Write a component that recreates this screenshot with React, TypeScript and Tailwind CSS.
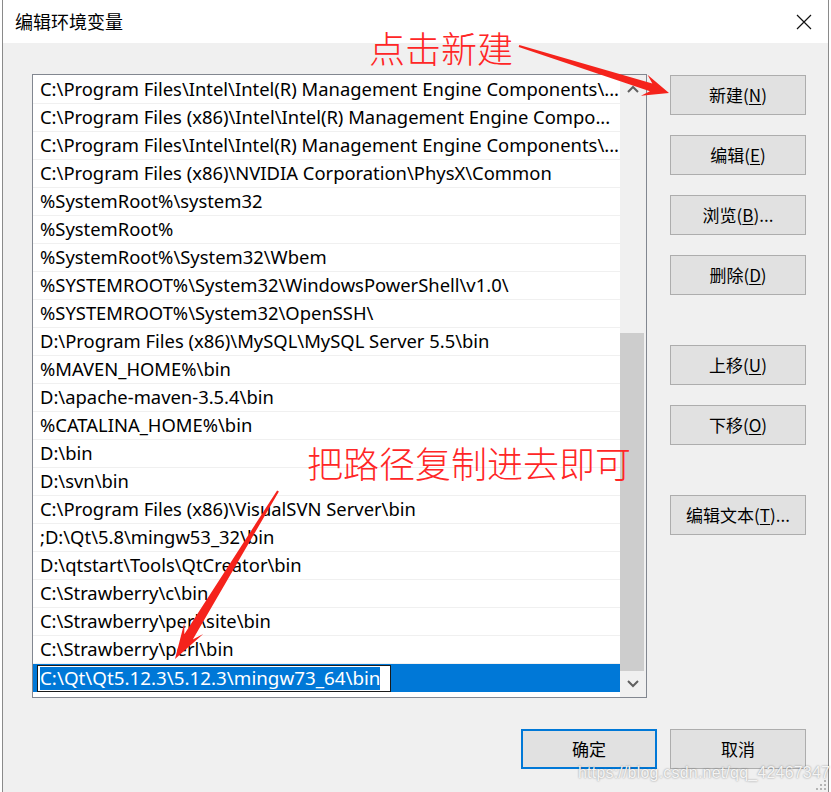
import React from 'react';

const paths: string[] = [
  'C:\\Program Files\\Intel\\Intel(R) Management Engine Components\\...',
  'C:\\Program Files (x86)\\Intel\\Intel(R) Management Engine Compo...',
  'C:\\Program Files\\Intel\\Intel(R) Management Engine Components\\...',
  'C:\\Program Files (x86)\\NVIDIA Corporation\\PhysX\\Common',
  '%SystemRoot%\\system32',
  '%SystemRoot%',
  '%SystemRoot%\\System32\\Wbem',
  '%SYSTEMROOT%\\System32\\WindowsPowerShell\\v1.0\\',
  '%SYSTEMROOT%\\System32\\OpenSSH\\',
  'D:\\Program Files (x86)\\MySQL\\MySQL Server 5.5\\bin',
  '%MAVEN_HOME%\\bin',
  'D:\\apache-maven-3.5.4\\bin',
  '%CATALINA_HOME%\\bin',
  'D:\\bin',
  'D:\\svn\\bin',
  'C:\\Program Files (x86)\\VisualSVN Server\\bin',
  ';D:\\Qt\\5.8\\mingw53_32\\bin',
  'D:\\qtstart\\Tools\\QtCreator\\bin',
  'C:\\Strawberry\\c\\bin',
  'C:\\Strawberry\\perl\\site\\bin',
  'C:\\Strawberry\\perl\\bin',
];

const selectedPath = 'C:\\Qt\\Qt5.12.3\\5.12.3\\mingw73_64\\bin';

// polygon for a hand-drawn style annotation arrow (tapered shaft + swept head)
function arrowPoints(tx: number, ty: number, px: number, py: number, headLen: number, headHalf: number, tailHalf: number, neckHalf: number) {
  const dx = px - tx;
  const dy = py - ty;
  const len = Math.hypot(dx, dy);
  const ux = dx / len;
  const uy = dy / len;
  const nx = -uy;
  const ny = ux;
  const neck = headLen * 0.72;
  const nxc = px - ux * neck;
  const nyc = py - uy * neck;
  const wxc = px - ux * headLen;
  const wyc = py - uy * headLen;
  const pts = [
    [tx + nx * tailHalf, ty + ny * tailHalf],
    [nxc + nx * neckHalf, nyc + ny * neckHalf],
    [wxc + nx * headHalf, wyc + ny * headHalf],
    [px, py],
    [wxc - nx * headHalf, wyc - ny * headHalf],
    [nxc - nx * neckHalf, nyc - ny * neckHalf],
    [tx - nx * tailHalf, ty - ny * tailHalf],
  ];
  return pts.map(p => `${p[0].toFixed(1)},${p[1].toFixed(1)}`).join(' ');
}

const Chevron: React.FC<{ up?: boolean }> = ({ up }) => (
  <svg width="12" height="8" viewBox="0 0 12 8">
    <polyline
      points={up ? '1,7 6,2 11,7' : '1,1 6,6 11,1'}
      fill="none"
      stroke="#606060"
      strokeWidth="2"
    />
  </svg>
);

interface WinButtonProps {
  label: string;
  hotkey?: string;
  suffix?: string;
  className?: string;
  primary?: boolean;
}

const WinButton: React.FC<WinButtonProps> = ({ label, hotkey, suffix = '', className = '', primary }) => (
  <div
    className={`w-[136px] h-[40px] flex items-center justify-center bg-[#e1e1e1] text-[17px] text-black ${
      primary ? 'border-2 border-[#0078d7]' : 'border border-[#adadad]'
    } ${className}`}
  >
    <span>
      {label}
      {hotkey && (
        <>
          (<span className="underline underline-offset-2">{hotkey}</span>)
        </>
      )}
      {suffix}
    </span>
  </div>
);

export default function App() {
  return (
    <div className="relative w-[831px] h-[792px] overflow-hidden flex bg-white font-['Noto_Sans','Noto_Sans_CJK_SC',sans-serif]">
      {/* sliver of the window behind */}
      <div className="w-[2px] h-full bg-white" />

      <div className="w-[827px] h-full flex flex-col border-x border-[#8a8a8a]">
        {/* title bar */}
        <div className="h-[43px] bg-white flex items-center justify-between pl-[12px] pr-[16px]">
          <span className="text-[18px] text-black font-['Noto_Sans_CJK_SC',sans-serif]">编辑环境变量</span>
          <svg width="16" height="16" viewBox="0 0 16 16">
            <path d="M1 1 L15 15 M15 1 L1 15" stroke="#111" strokeWidth="1.2" />
          </svg>
        </div>

        {/* body */}
        <div className="flex-1 bg-[#f0f0f0] flex flex-col pt-[31px] pl-[29px] pr-[21px]">
          <div className="flex gap-[23px]">
            {/* list box */}
            <div className="w-[615px] h-[624px] border border-[#828790] bg-white flex">
              <div className="w-[587px] pt-[1px] flex flex-col">
                {paths.map((p, i) => (
                  <div
                    key={i}
                    className="h-[28px] shrink-0 border-b border-[#f0f0f0] pl-[7px] pb-[1px] flex items-center text-[18.4px] text-black whitespace-nowrap overflow-hidden"
                  >
                    {p}
                  </div>
                ))}
                <div className="h-[28px] shrink-0 bg-[#0078d7] pl-[4px] flex items-center">
                  <div className="h-[27px] bg-white border border-[#1a1a1a] flex items-center pl-[2px] pr-[10px]">
                    <span className="bg-[#0078d7] text-white text-[18.8px] leading-[23px] whitespace-nowrap">
                      {selectedPath}
                    </span>
                  </div>
                </div>
              </div>

              {/* scrollbar */}
              <div className="w-[26px] h-full bg-[#f0f0f0] flex flex-col">
                <div className="h-[26px] flex items-center justify-center pr-[1px] pt-[2px]">
                  <Chevron up />
                </div>
                <div className="flex-1 flex flex-col justify-end">
                  <div className="h-[338px] bg-[#cdcdcd] mr-[2px]" />
                </div>
                <div className="h-[26px] flex items-center justify-center pr-[1px]">
                  <Chevron />
                </div>
              </div>
            </div>

            {/* side buttons */}
            <div className="flex flex-col gap-[20px] pt-[1px] font-['Noto_Sans_CJK_SC',sans-serif]">
              <WinButton label="新建" hotkey="N" />
              <WinButton label="编辑" hotkey="E" />
              <WinButton label="浏览" hotkey="B" suffix="..." />
              <WinButton label="删除" hotkey="D" />
              <WinButton label="上移" hotkey="U" className="mt-[30px]" />
              <WinButton label="下移" hotkey="O" />
              <WinButton label="编辑文本" hotkey="T" suffix="..." className="mt-[30px]" />
            </div>
          </div>

          {/* ok / cancel */}
          <div className="flex justify-end gap-[13px] mt-[31px] pr-[1px] font-['Noto_Sans_CJK_SC',sans-serif]">
            <WinButton label="确定" primary />
            <WinButton label="取消" />
          </div>
        </div>
      </div>

      <div className="w-[2px] h-full bg-white" />

      {/* resize grip */}
      <svg className="absolute right-[4px] bottom-[1px]" width="12" height="12" viewBox="0 0 12 12">
        <rect x="9" y="1" width="2" height="2" fill="#b4b4b4" />
        <rect x="5" y="5" width="2" height="2" fill="#b4b4b4" />
        <rect x="9" y="5" width="2" height="2" fill="#b4b4b4" />
        <rect x="1" y="9" width="2" height="2" fill="#b4b4b4" />
        <rect x="5" y="9" width="2" height="2" fill="#b4b4b4" />
        <rect x="9" y="9" width="2" height="2" fill="#b4b4b4" />
      </svg>

      {/* watermark */}
      <div className="absolute left-[578px] top-[761px] text-[16px] tracking-[0.2px] text-[#f4f4f4] font-['Liberation_Sans',sans-serif] [text-shadow:0_0_2px_rgba(0,0,0,0.45)] pointer-events-none">
        https://blog.csdn.net/qq_42467347
      </div>

      {/* annotations */}
      <div className="absolute left-[369px] top-[29px] text-[36px] leading-none text-[#ff2626] font-['Noto_Sans_CJK_SC',sans-serif] font-light pointer-events-none">
        点击新建
      </div>
      <div className="absolute left-[307px] top-[444px] text-[36px] leading-none text-[#ff2626] font-['Noto_Sans_CJK_SC',sans-serif] font-light pointer-events-none">
        把路径复制进去即可
      </div>
      <svg className="absolute left-0 top-0 pointer-events-none" width="831" height="792" viewBox="0 0 831 792">
        <polygon points={arrowPoints(519, 46, 669, 93, 26, 11, 1, 4)} fill="#f5231c" />
        <polygon points={arrowPoints(278, 491, 175, 659, 36, 11, 1, 5)} fill="#f5231c" />
      </svg>
    </div>
  );
}
